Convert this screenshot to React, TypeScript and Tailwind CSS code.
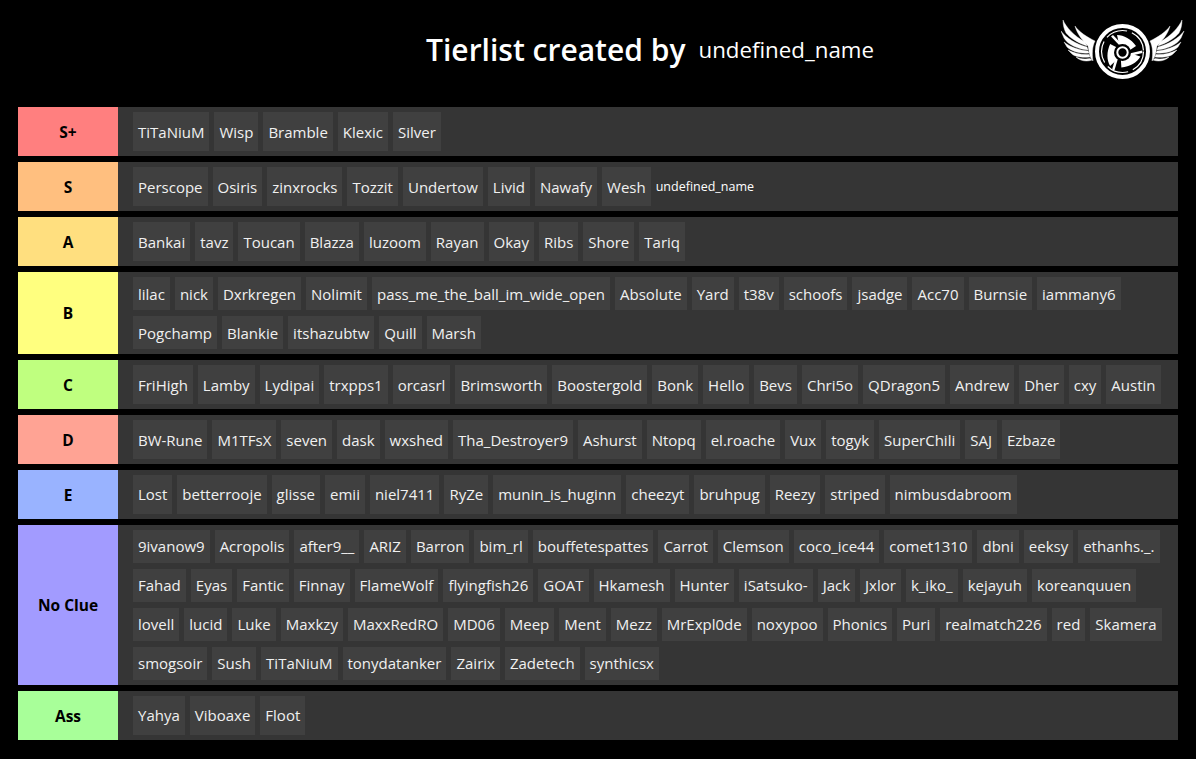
const font = "font-['Open_Sans','Noto_Sans',sans-serif]";

const tiers = [
  { label: "S+", color: "bg-[#ff7f7f]", names: ["TiTaNiuM", "Wisp", "Bramble", "Klexic", "Silver"] },
  { label: "S", color: "bg-[#ffbf7f]", names: ["Perscope", "Osiris", "zinxrocks", "Tozzit", "Undertow", "Livid", "Nawafy", "Wesh"], extra: "undefined_name" },
  { label: "A", color: "bg-[#ffdf7f]", names: ["Bankai", "tavz", "Toucan", "Blazza", "luzoom", "Rayan", "Okay", "Ribs", "Shore", "Tariq"] },
  { label: "B", color: "bg-[#ffff7f]", names: ["lilac", "nick", "Dxrkregen", "Nolimit", "pass_me_the_ball_im_wide_open", "Absolute", "Yard", "t38v", "schoofs", "jsadge", "Acc70", "Burnsie", "iammany6", "Pogchamp", "Blankie", "itshazubtw", "Quill", "Marsh"] },
  { label: "C", color: "bg-[#bfff7f]", names: ["FriHigh", "Lamby", "Lydipai", "trxpps1", "orcasrl", "Brimsworth", "Boostergold", "Bonk", "Hello", "Bevs", "Chri5o", "QDragon5", "Andrew", "Dher", "cxy", "Austin"] },
  { label: "D", color: "bg-[#ffa394]", names: ["BW-Rune", "M1TFsX", "seven", "dask", "wxshed", "Tha_Destroyer9", "Ashurst", "Ntopq", "el.roache", "Vux", "togyk", "SuperChili", "SAJ", "Ezbaze"] },
  { label: "E", color: "bg-[#99b3ff]", names: ["Lost", "betterrooje", "glisse", "emii", "niel7411", "RyZe", "munin_is_huginn", "cheezyt", "bruhpug", "Reezy", "striped", "nimbusdabroom"] },
  { label: "No Clue", color: "bg-[#a29bff]", names: ["9ivanow9", "Acropolis", "after9__", "ARIZ", "Barron", "bim_rl", "bouffetespattes", "Carrot", "Clemson", "coco_ice44", "comet1310", "dbni", "eeksy", "ethanhs._.", "Fahad", "Eyas", "Fantic", "Finnay", "FlameWolf", "flyingfish26", "GOAT", "Hkamesh", "Hunter", "iSatsuko-", "Jack", "Jxlor", "k_iko_", "kejayuh", "koreanquuen", "lovell", "lucid", "Luke", "Maxkzy", "MaxxRedRO", "MD06", "Meep", "Ment", "Mezz", "MrExpl0de", "noxypoo", "Phonics", "Puri", "realmatch226", "red", "Skamera", "smogsoir", "Sush", "TiTaNiuM", "tonydatanker", "Zairix", "Zadetech", "synthicsx"] },
  { label: "Ass", color: "bg-[#a8ff99]", names: ["Yahya", "Viboaxe", "Floot"] },
];

// coordinates are page pixels, so the viewBox starts at the logo's top-left corner
function Logo() {
  const feathers = [
    "M1075 26 C1079 32 1087 37 1095 41 C1092 47 1092 54 1093 61 C1089 57 1089 50 1088 46 C1083 41 1077 34 1075 26Z",
    "M1063 20 C1066 27 1074 36 1085 42 L1087 46 C1078 43 1070 38 1066 33 C1064 29 1063 25 1063 20Z",
    "M1061 31 C1066 38 1076 44 1087 47 L1088 50 C1078 49 1068 45 1064 38Z",
    "M1064 42 C1070 47 1079 50 1088 51 L1089 53 C1080 54 1071 51 1067 47Z",
    "M1068 50 C1074 53 1081 55 1089 54.5 L1090 57 C1083 58 1074 57 1071 53Z",
    "M1076 57 C1080 59 1085 59.5 1090 58.5 L1092 60 C1087 62 1080 61 1076 57Z",
  ];
  return (
    <svg width="124" height="62" viewBox="1061 20 124 62" className="block">
      <g fill="#fff" stroke="#fff" strokeWidth="0.4">
        {feathers.map((d) => (
          <path key={d} d={d} />
        ))}
      </g>
      <g fill="#fff" stroke="#fff" strokeWidth="0.4" transform="translate(2245 0) scale(-1 1)">
        {feathers.map((d) => (
          <path key={d} d={d} />
        ))}
      </g>
      <circle cx="1122.5" cy="51.5" r="25.5" fill="#000" stroke="#fff" strokeWidth="4" />
      <circle cx="1122.5" cy="51.5" r="21" fill="none" stroke="#fff" strokeWidth="1.2" strokeDasharray="22 5" />
      <g fill="#fff">
        {[0, 120, 240].map((angle) => (
          <g key={angle} transform={`rotate(${angle} 1122.5 52.5)`}>
            <path d="M1117 35 C1124 35 1131 39 1136 46 L1130 50 C1127 46 1123 44 1119 44Z" />
            <path d="M1120 46 L1111 36.5 L1113 35 L1122.5 45Z" />
          </g>
        ))}
      </g>
      <circle cx="1122.5" cy="52.5" r="8.5" fill="#000" />
      <circle cx="1122.5" cy="52.5" r="5.2" fill="none" stroke="#fff" strokeWidth="2" />
    </svg>
  );
}

export default function App() {
  return (
    <div className={`min-h-[759px] bg-black px-[18px] text-white ${font}`}>
      <header className="relative flex h-[106.7px] items-start justify-center pl-[104px] pt-[29px]">
        <div className="flex items-center gap-[13px]">
          <h1 className="text-[30px] font-semibold leading-[42px]">Tierlist created by</h1>
          <span className="text-[22.3px] leading-[42px]">undefined_name</span>
        </div>
        <div className="absolute right-[-7px] top-[20px]">
          <Logo />
        </div>
      </header>
      <div className="flex flex-col gap-[5.67px]">
        {tiers.map((tier) => (
          <div key={tier.label} className="flex min-h-[49.33px] bg-[#353535]">
            <div className={`flex w-[100px] shrink-0 items-center justify-center pt-[2px] text-[15.5px] font-bold text-black ${tier.color}`}>
              {tier.label}
            </div>
            <div className="flex flex-1 flex-wrap gap-x-[5px] gap-y-[5.67px] py-[5px] pl-[15px] pr-[10px]">
              {tier.names.map((name, i) => (
                <div key={name + i} className="flex min-h-[33.33px] items-center bg-[#404040] px-[5px] pt-px text-[15px] text-[#f0f0f0]">
                  {name}
                </div>
              ))}
              {tier.extra && (
                <div className="flex items-center pt-[2px] text-[12.5px]">{tier.extra}</div>
              )}
            </div>
          </div>
        ))}
      </div>
    </div>
  );
}
